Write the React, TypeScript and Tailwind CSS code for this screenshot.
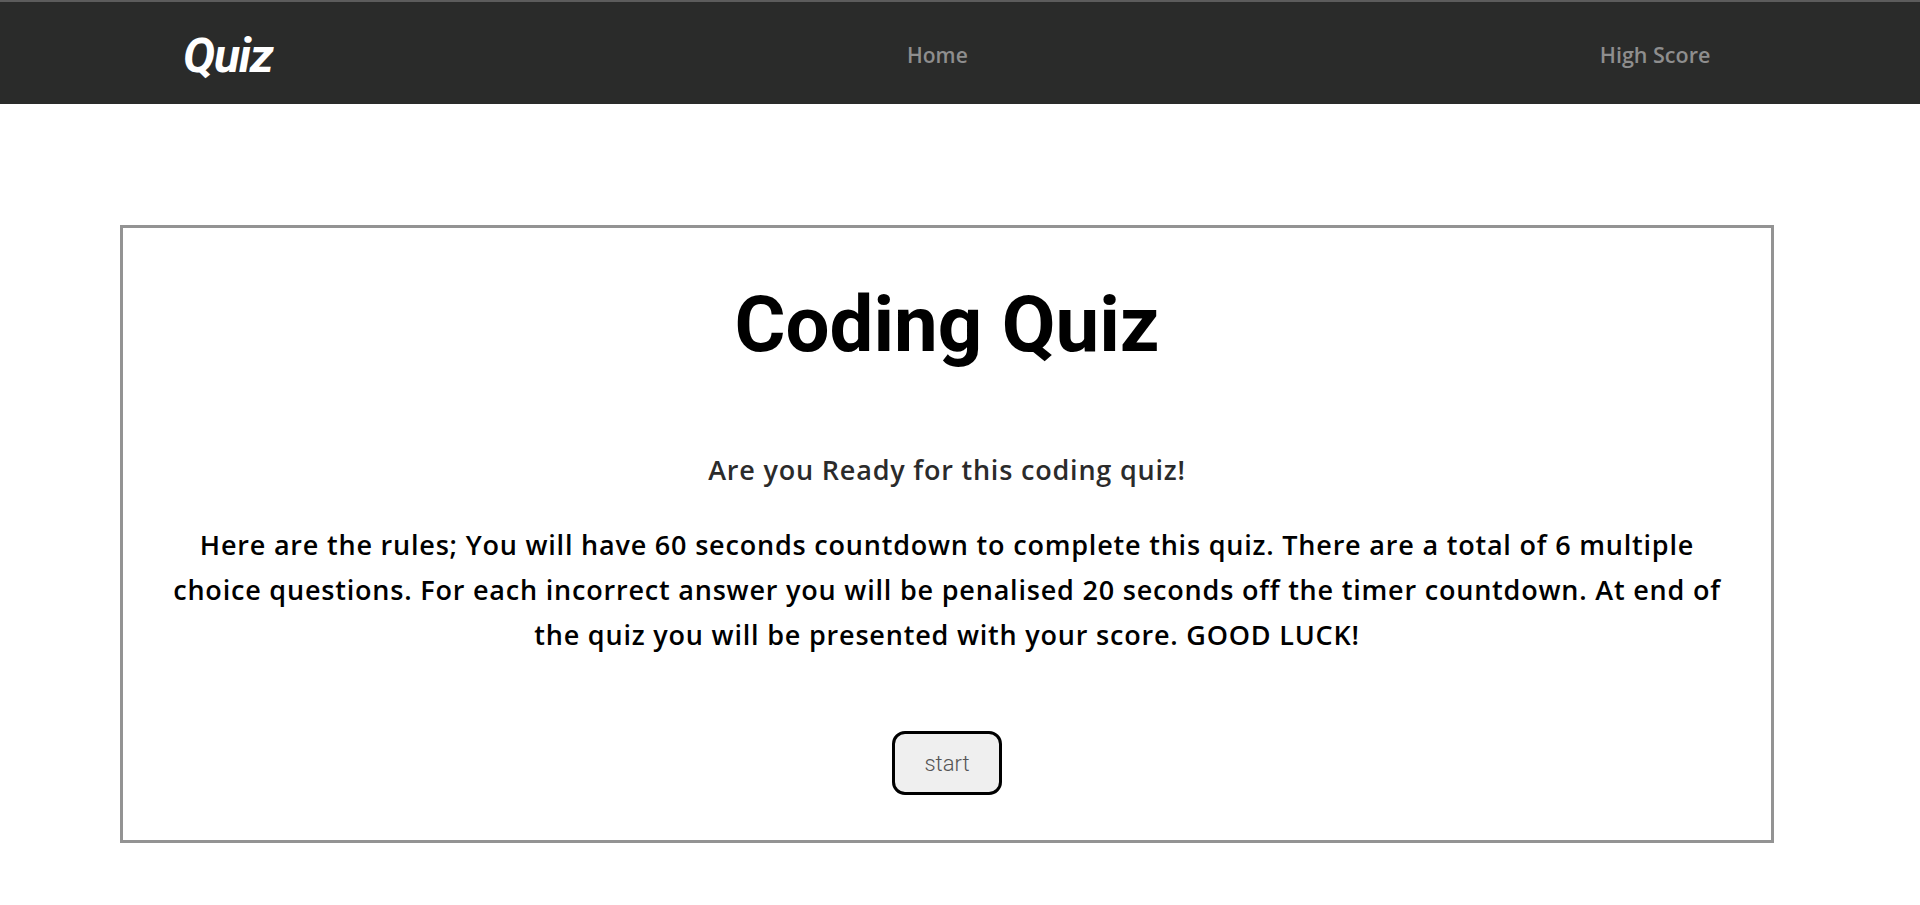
import React from "react";

const rules = [
  "Here are the rules; You will have 60 seconds countdown to complete this quiz. There are a total of 6 multiple",
  "choice questions. For each incorrect answer you will be penalised 20 seconds off the timer countdown. At end of",
  "the quiz you will be presented with your score. GOOD LUCK!",
];

export default function App() {
  return (
    <div className="min-h-[980px] bg-white font-['Roboto','Liberation_Sans',sans-serif]">
      {/* top nav */}
      <header className="h-[104px] border-t-2 border-[#5c5c5c] bg-[#2a2b2a] flex items-center pt-[5px]">
        <a href="#" className="ml-[183px] w-[94px] text-[48px] font-bold italic text-white leading-none tracking-tight">
          Quiz
        </a>
        <nav className="flex items-center font-['Open_Sans',sans-serif]">
          <a href="#" className="ml-[630px] text-[21px] font-semibold text-[#8e8e8e]">
            Home
          </a>
          <a href="#" className="ml-[632px] text-[21.5px] font-semibold text-[#8e8e8e]">
            High Score
          </a>
        </nav>
      </header>

      <main className="pt-[121px]">
        <section className="ml-[120px] w-[1654px] border-[3px] border-[#939393] flex flex-col items-center pb-[45px]">
          <h1 className="mt-[49px] text-[78px] leading-[96px] font-bold text-black">Coding Quiz</h1>
          <div className="font-['Open_Sans',sans-serif] flex flex-col items-center tracking-[0.8px]">
            <h3 className="mt-[81px] text-[27px] leading-[32px] font-semibold text-[#2b2b2b]">
              Are you Ready for this coding quiz!
            </h3>
            <p className="mt-[36px] text-center text-[27px] leading-[45px] font-semibold text-black">
              {rules.map((line) => (
                <span key={line} className="block whitespace-nowrap">
                  {line}
                </span>
              ))}
            </p>
          </div>
          <button className="mt-[74px] h-[64px] w-[110px] rounded-[13px] border-[3px] border-black bg-[#efefef] text-[22px] font-light text-[#555]">
            start
          </button>
        </section>
      </main>
    </div>
  );
}
